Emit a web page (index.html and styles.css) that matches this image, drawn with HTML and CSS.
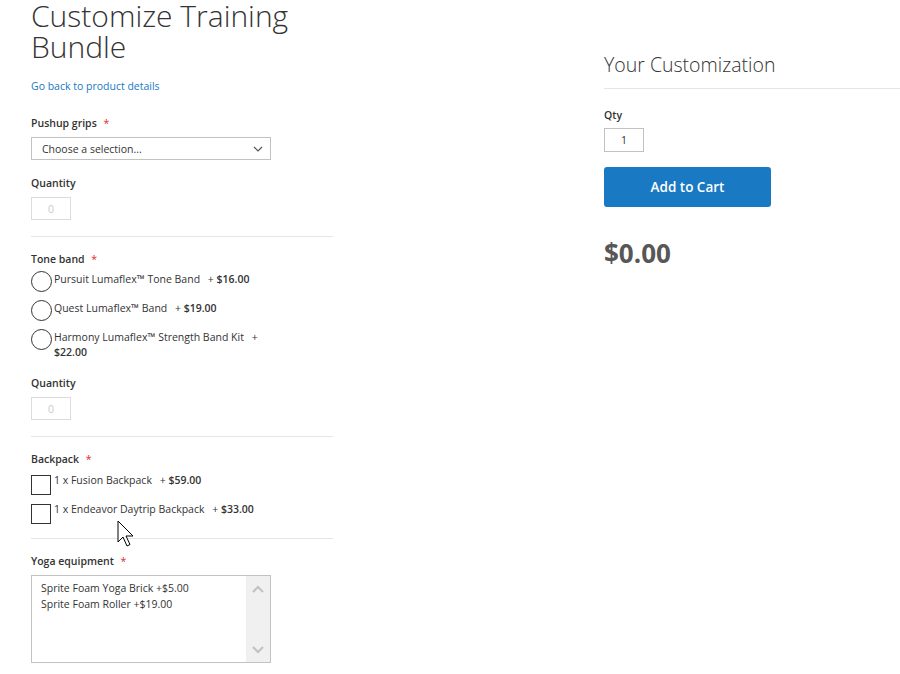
FILE: index.html
```html
<!DOCTYPE html>
<html>

<head>
    <link rel="stylesheet" href="styles.css">
</head>

<body>
    <div class="page">
        <div class="options-col">
            <h1 class="page-title">Customize Training Bundle</h1>
            <a class="back-link" href="#">Go back to product details</a>

            <div class="field-set first">
                <p class="label">Pushup grips <span class="required">*</span></p>
                <div class="select-wrap">
                    <select class="select">
                        <option>Choose a selection...</option>
                    </select>
                    <svg class="chevron" width="10" height="6" viewBox="0 0 10 6">
                        <path d="M1 1 L5 5 L9 1" fill="none" stroke="#555" stroke-width="1.2" />
                    </svg>
                </div>
                <p class="label qty-label">Quantity</p>
                <input class="qty-input" type="text" value="0" disabled>
            </div>

            <div class="field-set">
                <p class="label">Tone band <span class="required">*</span></p>
                <div class="choices">
                    <label class="choice">
                        <input class="radio" type="radio" name="tone">
                        <span class="choice-text">Pursuit Lumaflex™ Tone Band <span class="notice">+ <b>$16.00</b></span></span>
                    </label>
                    <label class="choice">
                        <input class="radio" type="radio" name="tone">
                        <span class="choice-text">Quest Lumaflex™ Band <span class="notice">+ <b>$19.00</b></span></span>
                    </label>
                    <label class="choice">
                        <input class="radio" type="radio" name="tone">
                        <span class="choice-text">Harmony Lumaflex™ Strength Band Kit <span class="notice">+ <b>$22.00</b></span></span>
                    </label>
                </div>
                <p class="label qty-label">Quantity</p>
                <input class="qty-input" type="text" value="0" disabled>
            </div>

            <div class="field-set backpacks">
                <p class="label">Backpack <span class="required">*</span></p>
                <div class="choices boxes">
                    <label class="choice">
                        <input class="checkbox" type="checkbox">
                        <span class="choice-text">1 x Fusion Backpack <span class="notice">+ <b>$59.00</b></span></span>
                    </label>
                    <label class="choice">
                        <input class="checkbox" type="checkbox">
                        <span class="choice-text">1 x Endeavor Daytrip Backpack <span class="notice">+ <b>$33.00</b></span></span>
                    </label>
                </div>
            </div>

            <div class="field-set last">
                <p class="label">Yoga equipment <span class="required">*</span></p>
                <div class="listbox">
                    <div class="list-options">
                        <div class="list-option">Sprite Foam Yoga Brick +$5.00</div>
                        <div class="list-option">Sprite Foam Roller +$19.00</div>
                    </div>
                    <div class="scrollbar">
                        <svg width="12" height="8" viewBox="0 0 12 8">
                            <path d="M1 7 L6 2 L11 7" fill="none" stroke="#c1c1c1" stroke-width="2" />
                        </svg>
                        <svg width="12" height="8" viewBox="0 0 12 8">
                            <path d="M1 1 L6 6 L11 1" fill="none" stroke="#c1c1c1" stroke-width="2" />
                        </svg>
                    </div>
                </div>
            </div>
        </div>

        <div class="summary-col">
            <h2 class="summary-title">Your Customization</h2>
            <p class="label qty-top">Qty</p>
            <input class="cart-qty" type="text" value="1">
            <button class="add-button">Add to Cart</button>
            <p class="total">$0.00</p>
        </div>
    </div>

    <svg class="cursor" width="20" height="30" viewBox="0 0 20 30">
        <path d="M1 1 L1 22 L6 17 L10 26 L13 24.5 L9 16 L16 16 Z" fill="#fff" stroke="#000" stroke-width="1" stroke-linejoin="round" />
    </svg>
</body>

</html>
```

FILE: styles.css
```css
body {
    margin: 0;
    background-color: #fff;
    color: #333;
    font-family: "Open Sans", "Liberation Sans", sans-serif;
    font-size: 10.5px;
}

.page {
    display: flex;
    padding-left: 31px;
}

.options-col {
    width: 302px;
    display: flex;
    flex-direction: column;
    align-items: flex-start;
}

.page-title {
    margin: 0;
    font-size: 30px;
    line-height: 31px;
    font-weight: 300;
    color: #333;
    width: 280px;
}

.back-link {
    margin-top: 16px;
    line-height: 16px;
    color: #1979c3;
    text-decoration: none;
}

.field-set {
    align-self: stretch;
    padding: 14px 0 16px;
    border-bottom: 1px solid #e5e5e5;
}

.field-set.first {
    margin-top: 7px;
}

.field-set.backpacks {
    padding-bottom: 14px;
}

.field-set.last {
    border-bottom: none;
}

.label {
    margin: 0;
    line-height: 16px;
    font-weight: 600;
}

.required {
    color: #e02b27;
    font-weight: 400;
    margin-left: 4px;
}

.select-wrap {
    position: relative;
    width: 240px;
    margin-top: 6px;
}

.select {
    appearance: none;
    width: 240px;
    height: 23px;
    margin: 0;
    padding: 0 0 0 10px;
    border: 1px solid #c2c2c2;
    background-color: #fff;
    font-family: inherit;
    font-size: 10.5px;
    color: #333;
    display: block;
}

.chevron {
    position: absolute;
    right: 8px;
    top: 9px;
}

.qty-label {
    margin-top: 15px;
}

.qty-input {
    display: block;
    box-sizing: border-box;
    width: 40px;
    height: 23px;
    margin: 6px 0 0;
    border: 1px solid #dcdcdc;
    background-color: #fff;
    text-align: center;
    font-family: inherit;
    font-size: 10.5px;
    color: #c8c8c8;
    padding: 0;
}

.choices {
    display: flex;
    flex-direction: column;
    gap: 8px;
    margin-top: 4px;
}

.choices.boxes {
    margin-top: 8px;
    gap: 9px;
}

.choice {
    display: flex;
    align-items: flex-start;
}

.radio {
    appearance: none;
    flex: none;
    width: 21px;
    height: 21px;
    margin: 0;
    border: 1px solid #333;
    border-radius: 50%;
    background-color: #fff;
}

.checkbox {
    appearance: none;
    flex: none;
    width: 20px;
    height: 20px;
    margin: 0;
    border: 1px solid #333;
    background-color: #fff;
}

.choice-text {
    margin-left: 2px;
    padding-top: 1px;
    line-height: 15px;
    width: 220px;
}

.boxes .choice-text {
    margin-left: 3px;
    margin-top: -3px;
    width: 260px;
}

.notice {
    margin-left: 5px;
}

.notice b {
    font-weight: 600;
}

.listbox {
    display: flex;
    width: 240px;
    height: 88px;
    box-sizing: border-box;
    margin-top: 6px;
    border: 1px solid #c2c2c2;
}

.list-options {
    flex: 1;
    padding: 4px 0 0 9px;
}

.list-option {
    line-height: 16px;
}

.scrollbar {
    width: 24px;
    background-color: #f0f0f0;
    display: flex;
    flex-direction: column;
    align-items: center;
    justify-content: space-between;
    padding: 9px 0 8px;
}

.summary-col {
    margin-left: 271px;
    flex: 1;
    display: flex;
    flex-direction: column;
    align-items: flex-start;
    padding-top: 52px;
}

.summary-title {
    align-self: stretch;
    margin: 0;
    padding-bottom: 10px;
    border-bottom: 1px solid #e5e5e5;
    font-size: 19.5px;
    line-height: 26px;
    font-weight: 300;
    color: #333;
}

.qty-top {
    margin-top: 18px;
}

.cart-qty {
    box-sizing: border-box;
    width: 40px;
    height: 24px;
    margin: 5px 0 0;
    padding: 0;
    border: 1px solid #c2c2c2;
    text-align: center;
    font-family: inherit;
    font-size: 10.5px;
    color: #333;
}

.add-button {
    margin-top: 15px;
    width: 167px;
    height: 40px;
    border: none;
    border-radius: 3px;
    background-color: #1979c3;
    color: #fff;
    font-family: inherit;
    font-size: 13.5px;
    font-weight: 600;
}

.total {
    margin: 31px 0 0;
    font-size: 26px;
    line-height: 30px;
    font-weight: 700;
    color: #575757;
}

.cursor {
    position: absolute;
    left: 117px;
    top: 520px;
}
```
